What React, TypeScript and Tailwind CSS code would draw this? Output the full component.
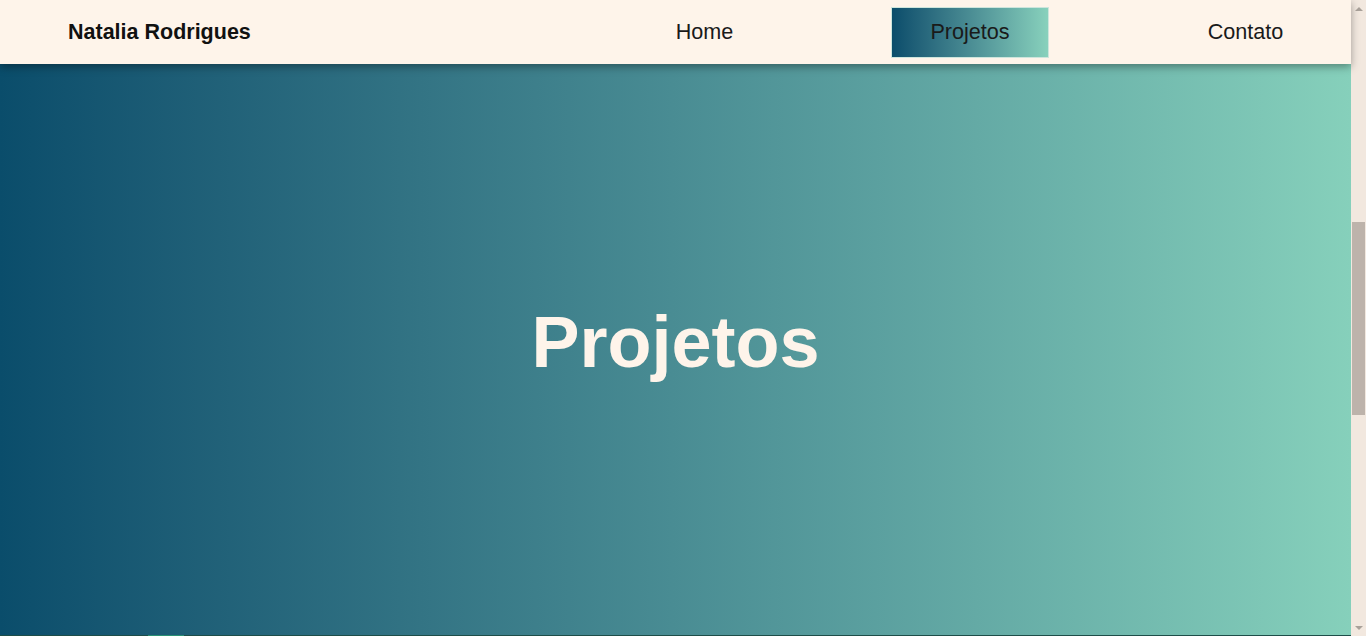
import React from "react";

export default function App() {
  const font = { fontFamily: '"Liberation Sans", Arial, sans-serif' };

  return (
    <div style={font} className="flex h-[636px] w-full overflow-hidden bg-[#fef4ea]">
      <div className="flex min-w-0 flex-1 flex-col">
        <header className="relative z-10 flex h-16 shrink-0 items-center justify-between bg-[#fef4ea] pl-[68px] pr-[28px] shadow-[0_3px_8px_rgba(0,0,0,0.35)]">
          <div className="text-[21.5px] font-bold text-[#111]">Natalia Rodrigues</div>
          <nav className="flex items-center text-[21.6px] text-[#1a1a1a]">
            <a className="flex h-[51px] w-[137px] items-center justify-center border border-transparent">Home</a>
            <a className="ml-[118px] flex h-[51px] w-[158px] items-center justify-center border border-[#cde5dc] bg-gradient-to-r from-[#0a4d6b] to-[#88d1bc]">
              Projetos
            </a>
            <a className="ml-[119px] flex h-[51px] w-[155px] items-center justify-center border border-transparent">
              Contato
            </a>
          </nav>
        </header>

        <section className="flex flex-1 items-center justify-center bg-gradient-to-r from-[#0a4d6b] to-[#86d0bb] pb-[15px]">
          <h1 className="text-[72px] font-bold leading-none text-[#fef4ea]">Projetos</h1>
        </section>

        <div className="h-px shrink-0 bg-[#1e4d48]">
          <div className="ml-[148px] h-px w-[36px] bg-[#2a9073]" />
        </div>
      </div>

      <div className="flex w-[15px] shrink-0 flex-col bg-[#f2e8df]">
        <div className="flex h-[17px] items-center justify-center">
          <div className="h-0 w-0 border-x-[4px] border-b-[4px] border-x-transparent border-b-[#a9a19a]" />
        </div>
        <div className="h-[205px]" />
        <div className="mx-px h-[193px] bg-[#bdb3ab]" />
        <div className="flex-1" />
        <div className="flex h-[17px] items-center justify-center">
          <div className="h-0 w-0 border-x-[4px] border-t-[4px] border-x-transparent border-t-[#a9a19a]" />
        </div>
      </div>
    </div>
  );
}
